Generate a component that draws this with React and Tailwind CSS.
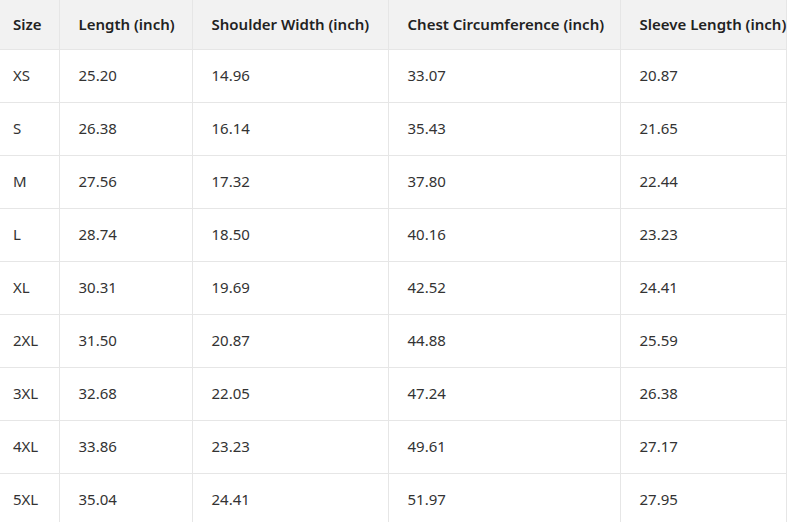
import React from "react";

const columns = [
  { label: "Size", width: "w-[59px]", pad: "pl-[13px]" },
  { label: "Length (inch)", width: "w-[133px]", pad: "pl-[19px]" },
  { label: "Shoulder Width (inch)", width: "w-[196px]", pad: "pl-[19px]" },
  { label: "Chest Circumference (inch)", width: "w-[232px]", pad: "pl-[19px]" },
  { label: "Sleeve Length (inch)", width: "w-[166px]", pad: "pl-[19px]" },
];

const rows = [
  ["XS", "25.20", "14.96", "33.07", "20.87"],
  ["S", "26.38", "16.14", "35.43", "21.65"],
  ["M", "27.56", "17.32", "37.80", "22.44"],
  ["L", "28.74", "18.50", "40.16", "23.23"],
  ["XL", "30.31", "19.69", "42.52", "24.41"],
  ["2XL", "31.50", "20.87", "44.88", "25.59"],
  ["3XL", "32.68", "22.05", "47.24", "26.38"],
  ["4XL", "33.86", "23.23", "49.61", "27.17"],
  ["5XL", "35.04", "24.41", "51.97", "27.95"],
];

export default function App() {
  return (
    <div className="h-[522px] w-[793px] overflow-hidden bg-white font-['Noto_Sans',sans-serif] text-[15px] text-[#333]">
      <table className="table-fixed border-collapse w-[786px]">
        <thead>
          <tr className="h-[49px] bg-[#f2f2f2]">
            {columns.map((c, i) => (
              <th
                key={c.label}
                className={`${c.width} ${c.pad} whitespace-nowrap text-left font-semibold text-[#222] border-b border-[#e6e6e6] ${
                  i > 0 ? "border-l" : ""
                } ${i === columns.length - 1 ? "border-r" : ""}`}
              >
                {c.label}
              </th>
            ))}
          </tr>
        </thead>
        <tbody>
          {rows.map((row) => (
            <tr key={row[0]} className="h-[53px]">
              {row.map((v, i) => (
                <td
                  key={i}
                  className={`${columns[i].pad} border-b border-[#e6e6e6] ${i > 0 ? "border-l" : ""} ${
                    i === row.length - 1 ? "border-r" : ""
                  }`}
                >
                  {v}
                </td>
              ))}
            </tr>
          ))}
        </tbody>
      </table>
    </div>
  );
}
